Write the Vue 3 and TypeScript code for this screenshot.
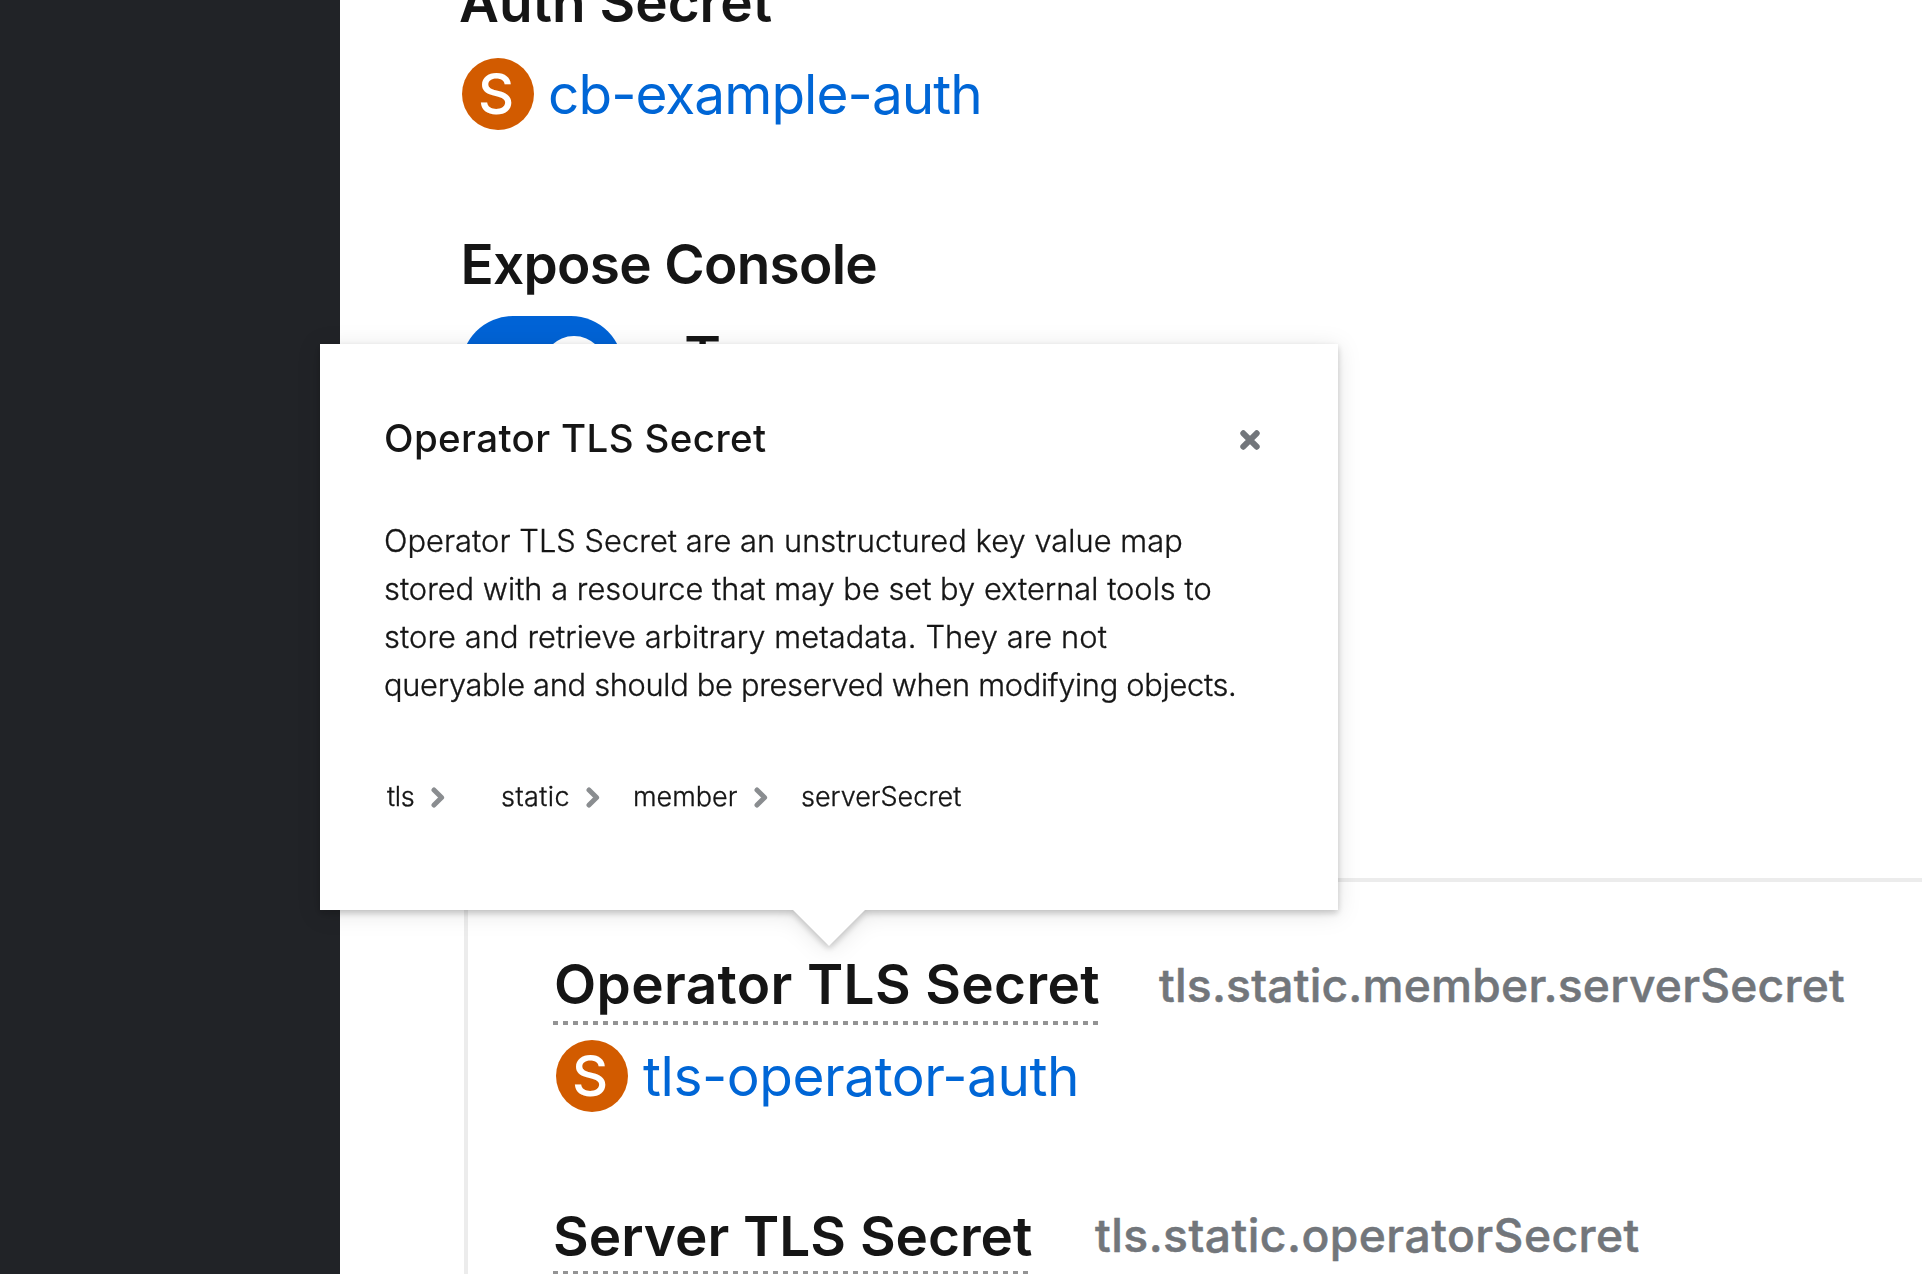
<script setup lang="ts">
interface SecretField {
  label: string
  path: string
  link?: string
  key: string
}

const fields: SecretField[] = [
  { key: 'operator', label: 'Operator TLS Secret', path: 'tls.static.member.serverSecret', link: 'tls-operator-auth' },
  { key: 'server', label: 'Server TLS Secret', path: 'tls.static.operatorSecret' },
]

const description: string[] = [
  'Operator TLS Secret are an unstructured key value map',
  'stored with a resource that may be set by external tools to',
  'store and retrieve arbitrary metadata. They are not',
  'queryable and should be preserved when modifying objects.',
]

const crumbs: string[] = ['tls', 'static', 'member', 'serverSecret']
</script>

<template>
  <div class="page">
    <aside class="sidebar"></aside>

    <main class="content">
      <h2 class="heading auth">Auth Secret</h2>
      <div class="resource auth-resource">
        <span class="badge"><span class="badge-letter">S</span></span>
        <a class="link cb">cb-example-auth</a>
      </div>

      <h2 class="heading expose">Expose Console</h2>
      <div class="switch-row">
        <span class="switch"><span class="knob"></span></span>
        <span class="switch-label">True</span>
      </div>

      <section class="panel">
        <div v-for="f in fields" :key="f.key" class="field" :class="f.key">
          <div class="field-head">
            <h2 class="heading dotted">{{ f.label }}</h2>
            <span class="path">{{ f.path }}</span>
          </div>
          <div v-if="f.link" class="resource">
            <span class="badge"><span class="badge-letter">S</span></span>
            <a class="link tls">{{ f.link }}</a>
          </div>
        </div>
      </section>
    </main>

    <div class="popover" role="dialog">
      <header class="popover-head">
        <h3 class="popover-title">Operator TLS Secret</h3>
        <svg class="close" viewBox="0 0 20 20" aria-label="Close">
          <path d="M3.3 3.3 16.7 16.7M16.7 3.3 3.3 16.7" />
        </svg>
      </header>
      <p class="description">
        <span v-for="(line, i) in description" :key="i" class="line" :class="'line-' + i">{{ line }}</span>
      </p>
      <nav class="crumbs">
        <span v-for="(c, i) in crumbs" :key="c" class="crumb" :class="'crumb-' + i">
          <span class="crumb-text">{{ c }}</span>
          <svg v-if="i < crumbs.length - 1" class="chevron" viewBox="0 0 14 21">
            <path d="M3 3 10.6 10.5 3 18" />
          </svg>
        </span>
      </nav>
      <span class="arrow"></span>
    </div>
  </div>
</template>

<style>
body {
  overflow: hidden;
}
</style>

<style scoped>
.page {
  position: relative;
  display: flex;
  width: 1922px;
  height: 1274px;
  overflow: hidden;
  background: #fff;
  color: #151515;
  font-family: Inter, 'Open Sans', sans-serif;
}
.sidebar {
  flex: none;
  width: 340px;
  background: #212327;
}
.content {
  flex: 1;
  min-width: 0;
  padding-left: 124px;
}
.heading {
  margin: 0;
  font-size: 54.9px;
  line-height: 64px;
  font-weight: 600;
  white-space: nowrap;
}
.auth {
  margin: -30px 0 0 -5px;
}
.resource {
  display: flex;
  height: 72px;
}
.auth-resource {
  margin: 24px 0 0 -2px;
}
.badge {
  flex: none;
  width: 72px;
  height: 72px;
  border-radius: 50%;
  background: #d25b00;
  color: #fff;
  text-align: center;
}
.badge-letter {
  display: block;
  margin-left: -4px;
  font-size: 56px;
  line-height: 72px;
  font-weight: 500;
}
.link {
  color: #0066d6;
  font-size: 54.9px;
  line-height: 72px;
  white-space: nowrap;
}
.cb {
  margin-left: 14px;
  letter-spacing: -0.92px;
}
.tls {
  margin-left: 15px;
  letter-spacing: -0.42px;
}
.expose {
  margin: 102px 0 0 -3.5px;
  letter-spacing: -0.7px;
}
.switch-row {
  display: flex;
  margin: 20px 0 0 -3px;
  height: 104px;
}
.switch {
  flex: none;
  box-sizing: border-box;
  display: flex;
  justify-content: flex-end;
  width: 162px;
  height: 104px;
  padding: 20px 17px;
  border-radius: 52px;
  background: #0063d6;
}
.knob {
  width: 64px;
  height: 64px;
  border-radius: 50%;
  background: #fff;
}
.switch-label {
  margin: 10px 0 0 61px;
  font-size: 57px;
  line-height: 64px;
  font-weight: 500;
}
.panel {
  box-sizing: border-box;
  margin-top: 458px;
  height: 420px;
  padding: 70px 0 0 85px;
  border: solid #ececec;
  border-width: 4px 0 0 4px;
}
.field-head {
  display: flex;
  align-items: flex-start;
}
.dotted {
  box-sizing: border-box;
  padding-bottom: 9px;
  background: repeating-linear-gradient(90deg, #939394 0 5px, transparent 5px 10px) 0 100% / 100% 4px no-repeat;
}
.operator .dotted {
  width: 545px;
  padding-left: 1px;
  letter-spacing: 0.37px;
}
.server .dotted {
  width: 475px;
  padding-bottom: 7px;
}
.path {
  color: #72767b;
  font-size: 46.2px;
  line-height: 64px;
  font-weight: 500;
  white-space: nowrap;
  -webkit-text-stroke: 0.5px #72767b;
}
.operator .path {
  margin: 1px 0 0 61px;
  letter-spacing: 0.2px;
}
.server .path {
  margin: -1px 0 0 67px;
  letter-spacing: 0.46px;
}
.field .resource {
  margin: 15px 0 0 3px;
}
.server {
  margin-top: 92px;
}
.popover {
  position: absolute;
  left: 320px;
  top: 344px;
  box-sizing: border-box;
  width: 1018px;
  height: 566px;
  padding: 66px 78px 0 64px;
  background: #fff;
  filter: drop-shadow(0 3px 3px rgba(3, 3, 3, 0.2)) drop-shadow(0 3px 11px rgba(3, 3, 3, 0.11));
}
.popover-head {
  display: flex;
  justify-content: space-between;
}
.popover-title {
  margin: 0;
  font-size: 38.5px;
  line-height: 56px;
  font-weight: 500;
  letter-spacing: 0.38px;
}
.close {
  width: 20px;
  height: 20px;
  margin-top: 20px;
  stroke: #72767b;
  stroke-width: 6;
  stroke-linecap: round;
}
.description {
  margin: 51px 0 0;
  font-size: 30.8px;
  line-height: 48px;
  font-weight: 300;
  -webkit-text-stroke: 0.35px #151515;
}
.line {
  display: block;
  white-space: nowrap;
}
.line-0 {
  letter-spacing: 0.065px;
}
.line-1 {
  letter-spacing: 0.02px;
}
.line-2 {
  letter-spacing: 0.1px;
}
.line-3 {
  letter-spacing: -0.3px;
}
.crumbs {
  display: flex;
  margin: 68px 0 0 3px;
  font-size: 27px;
  line-height: 40px;
  font-weight: 300;
  -webkit-text-stroke: 0.35px #151515;
}
.crumb {
  display: flex;
  align-items: center;
}
.crumb-0 {
  width: 114px;
}
.crumb-1 {
  width: 132px;
}
.crumb-2 {
  width: 168px;
}
.crumb-0 .crumb-text {
  width: 44px;
  letter-spacing: -0.3px;
}
.crumb-1 .crumb-text {
  width: 85px;
  letter-spacing: 0.45px;
}
.crumb-2 .crumb-text {
  width: 121px;
}
.crumb-3 .crumb-text {
  letter-spacing: 0;
}
.chevron {
  width: 14px;
  height: 21px;
  fill: none;
  stroke: #8a8d90;
  stroke-width: 5;
  stroke-linecap: round;
  stroke-linejoin: round;
}
.arrow {
  position: absolute;
  left: 472px;
  top: 565px;
  width: 74px;
  height: 37px;
  background: #fff;
  clip-path: polygon(0 0, 100% 0, 50% 100%);
}
</style>
